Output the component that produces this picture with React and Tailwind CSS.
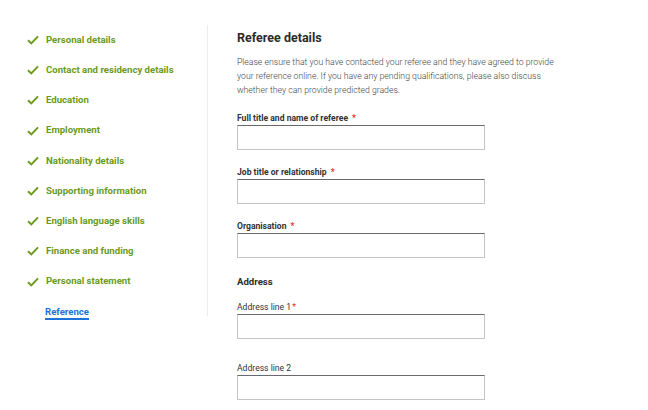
import React from 'react';

const steps = [
  'Personal details',
  'Contact and residency details',
  'Education',
  'Employment',
  'Nationality details',
  'Supporting information',
  'English language skills',
  'Finance and funding',
  'Personal statement',
];

const Check = () => (
  <svg width="12" height="10" viewBox="0 0 12 10" className="shrink-0">
    <path d="M1 5.2 L4.3 8.4 L11 1.4" fill="none" stroke="#6b9a1c" strokeWidth="2" />
  </svg>
);

const Field = ({ label, required, bold = true, className = '' }) => (
  <div className={className}>
    <div className={`h-[12px] leading-[12px] text-[8.6px] text-[#333] mb-[1px] ${bold ? 'font-bold' : ''}`}>
      {label}
      {required && <span className={`text-[#e0322b] ${bold ? 'ml-[4px]' : 'ml-[1px]'}`}>*</span>}
    </div>
    <div className="w-[248px] h-[25px] border border-[#c4c4c4] border-t-[#6a6a6a] bg-white" />
  </div>
);

export default function App() {
  return (
    <div className="w-[648px] h-[410px] bg-white flex overflow-hidden" style={{ fontFamily: 'Roboto, "Liberation Sans", sans-serif' }}>
      <div className="w-[208px] shrink-0 pt-[31px]">
        <div className="h-[291px] border-r border-[#ececec] -mt-[6px]">
          <ul className="pl-[27px]">
            {steps.map((s) => (
              <li key={s} className="h-[30.2px] flex items-center gap-[7px] text-[9.6px] font-bold text-[#6b9a1c]">
                <Check />
                <span>{s}</span>
              </li>
            ))}
            <li className="h-[30px] flex items-center pl-[18px] pt-[3px]">
              <span className="text-[9.6px] font-bold text-[#1a73d9] border-b-2 border-[#1a73d9] leading-[12px]">Reference</span>
            </li>
          </ul>
        </div>
      </div>
      <div className="pl-[29px] pt-[30px]">
        <h2 className="text-[12.5px] leading-[16px] font-bold text-[#2b2b2b]">Referee details</h2>
        <p className="mt-[9px] w-[318px] text-[8.7px] leading-[14px] text-[#444] font-light">
          Please ensure that you have contacted your referee and they have agreed to provide your reference online. If you have any pending qualifications, please also discuss whether they can provide predicted grades.
        </p>
        <Field label="Full title and name of referee" required className="mt-[15px]" />
        <Field label="Job title or relationship" required className="mt-[16px]" />
        <Field label="Organisation" required className="mt-[16px]" />
        <div className="mt-[17px] h-[14px] leading-[14px] text-[9.6px] font-bold text-[#2b2b2b]">Address</div>
        <Field label="Address line 1" required bold={false} className="mt-[12px]" />
        <Field label="Address line 2" bold={false} className="mt-[23px]" />
      </div>
    </div>
  );
}
